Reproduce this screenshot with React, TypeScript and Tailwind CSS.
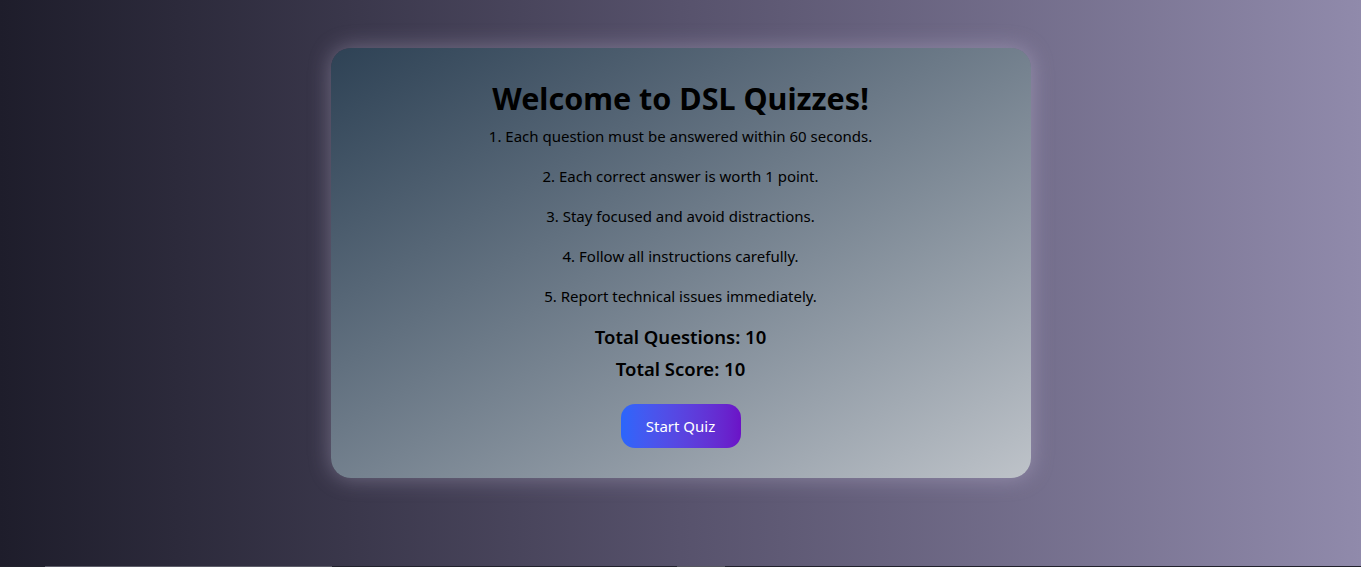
export default function App() {
  const rules = [
    "1. Each question must be answered within 60 seconds.",
    "2. Each correct answer is worth 1 point.",
    "3. Stay focused and avoid distractions.",
    "4. Follow all instructions carefully.",
    "5. Report technical issues immediately.",
  ]

  return (
    <div className="w-full font-['Noto_Sans','Open_Sans',sans-serif]">
      <div className="h-[566px] w-full flex justify-center pt-12 bg-gradient-to-r from-[#1e1d2b] via-[#57526c] to-[#908aab]">
        <div className="w-[700px] h-fit rounded-[20px] flex flex-col items-center pt-[26px] pb-[30px] text-black bg-gradient-to-br from-[#2e4255] to-[#bec3c9] shadow-[0_0_22px_rgba(220,210,240,0.35)]">
          <h1 className="text-[30.5px] leading-[48px] font-bold">Welcome to DSL Quizzes!</h1>
          <div className="mt-[2px] flex flex-col items-center gap-4 text-[15px] leading-6">
            {rules.map((r) => (
              <p key={r}>{r}</p>
            ))}
          </div>
          <p className="mt-[15px] text-[18.5px] leading-[28px] font-semibold">Total Questions: 10</p>
          <p className="mt-1 text-[18.5px] leading-[28px] font-semibold">Total Score: 10</p>
          <button className="mt-[21px] w-[120px] h-[44px] rounded-[14px] text-white text-[15px] bg-gradient-to-r from-[#2a66fb] to-[#6b12c7]">
            Start Quiz
          </button>
        </div>
      </div>
      <div className="h-px w-full flex bg-[#22222d]">
        <div className="ml-[45px] w-[287px] bg-[#5c5c68]" />
        <div className="ml-[345px] w-[48px] bg-[#55555f]" />
      </div>
    </div>
  )
}
